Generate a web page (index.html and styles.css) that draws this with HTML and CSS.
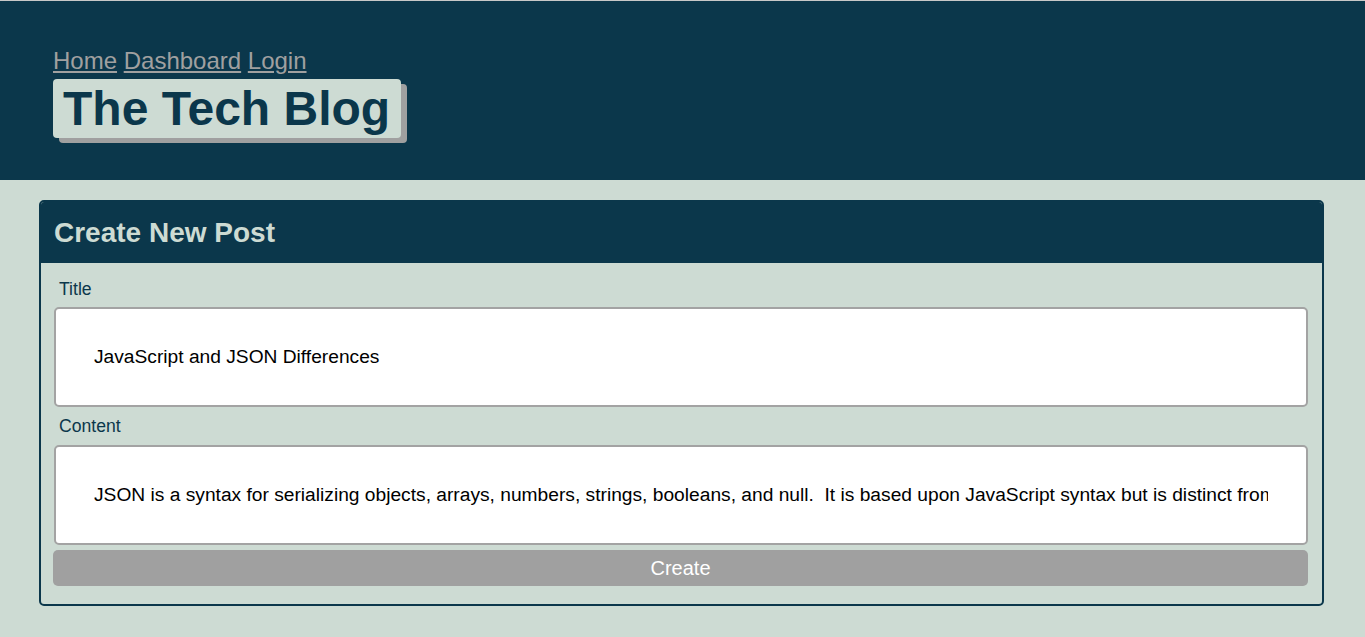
FILE: index.html
```html
<!DOCTYPE html>
<html lang="en">
<head>
<meta charset="utf-8">
<title>The Tech Blog</title>
<link rel="stylesheet" href="styles.css">
</head>
<body>
<header class="site-header">
  <nav class="nav">
    <a href="#" class="nav-link">Home</a>
    <a href="#" class="nav-link">Dashboard</a>
    <a href="#" class="nav-link">Login</a>
  </nav>
  <h1 class="brand">The Tech Blog</h1>
</header>
<main class="main">
  <section class="card">
    <h2 class="card-header">Create New Post</h2>
    <form class="card-body">
      <label class="field-label first" for="title">Title</label>
      <input class="field-input" id="title" type="text" value="JavaScript and JSON Differences">
      <label class="field-label" for="content">Content</label>
      <input class="field-input last" id="content" type="text" value="JSON is a syntax for serializing objects, arrays, numbers, strings, booleans, and null.  It is based upon JavaScript syntax but is distinct from JavaScript: most JavaScript is not JSON.">
      <button class="create-btn" type="button">Create</button>
    </form>
  </section>
</main>
</body>
</html>
```
FILE: styles.css
```css
* { box-sizing: border-box; }
html, body { margin: 0; padding: 0; }
body {
  background: #cddbd3;
  font-family: "Liberation Sans", Arial, sans-serif;
  min-height: 637px;
}
.site-header {
  background: #0b374b;
  border-top: 1px solid #c8c8c8;
  padding: 46px 53px 42px;
  display: flex;
  flex-direction: column;
  align-items: flex-start;
}
.nav {
  font-size: 24px;
  line-height: 28px;
}
.nav-link {
  color: #a0a0a0;
  text-decoration: underline;
}
.brand {
  margin: 4px 0 0;
  font-size: 48px;
  line-height: 55px;
  font-weight: bold;
  color: #0b374b;
  background: #cddbd3;
  padding: 2px 11px 2px 10px;
  border-radius: 4px;
  box-shadow: 6px 5px 0 #a0a0a0;
}
.main {
  padding: 20px 41px 0 39px;
}
.card {
  border: 2px solid #0b374b;
  border-radius: 5px;
  overflow: hidden;
}
.card-header {
  margin: 0;
  background: #0b374b;
  color: #cddbd3;
  font-size: 28px;
  line-height: 32px;
  font-weight: bold;
  padding: 15px 13px 14px;
}
.card-body {
  display: flex;
  flex-direction: column;
  padding: 16px 14px 18px 12px;
}
.field-label {
  display: block;
  margin: 0 0 9px 6px;
  font-size: 17.6px;
  line-height: 20px;
  color: #0b374b;
}
.field-label.first {
  margin-bottom: 8px;
}
.field-input {
  display: block;
  height: 100px;
  margin: 0 0 9px 1px;
  padding: 0 38px;
  border: 2px solid #a3a3a3;
  border-radius: 5px;
  background: #fff;
  font-family: "Liberation Sans", Arial, sans-serif;
  font-size: 19.2px;
  color: #000;
  outline: none;
}
.field-input.last {
  margin-bottom: 5px;
}
.create-btn {
  display: block;
  height: 36px;
  border: none;
  border-radius: 5px;
  background: #a0a0a0;
  color: #fff;
  font-family: "Liberation Sans", Arial, sans-serif;
  font-size: 20px;
  line-height: 24px;
  padding: 0;
}
```
